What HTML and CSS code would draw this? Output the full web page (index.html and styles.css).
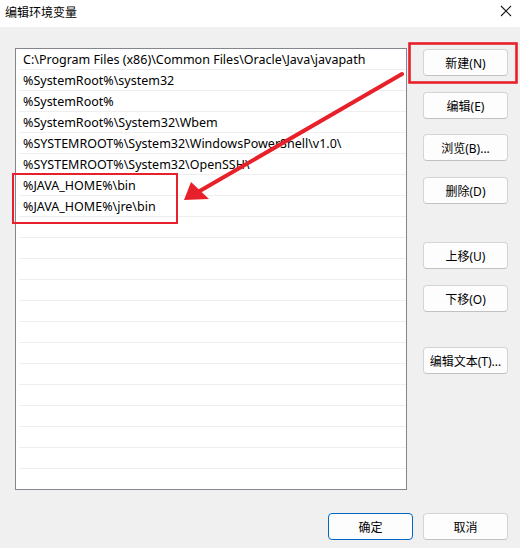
FILE: index.html
```html
<!DOCTYPE html>
<html lang="zh-CN">
<head>
<meta charset="utf-8">
<title>编辑环境变量</title>
<link rel="stylesheet" href="styles.css">
</head>
<body>
<div class="window">
  <div class="titlebar">
    <span class="title">编辑环境变量</span>
    <svg class="close" width="12" height="12" viewBox="0 0 12 12"><path d="M1 1L11 11M11 1L1 11" stroke="#1a1a1a" stroke-width="1.1" fill="none"/></svg>
  </div>
  <div class="content">
    <div class="main">
      <div class="list">
        <div class="row">C:\Program Files (x86)\Common Files\Oracle\Java\javapath</div>
        <div class="row">%SystemRoot%\system32</div>
        <div class="row">%SystemRoot%</div>
        <div class="row">%SystemRoot%\System32\Wbem</div>
        <div class="row">%SYSTEMROOT%\System32\WindowsPowerShell\v1.0\</div>
        <div class="row">%SYSTEMROOT%\System32\OpenSSH\</div>
        <div class="row">%JAVA_HOME%\bin</div>
        <div class="row">%JAVA_HOME%\jre\bin</div>
        <div class="row"></div><div class="row"></div><div class="row"></div><div class="row"></div>
        <div class="row"></div><div class="row"></div><div class="row"></div><div class="row"></div>
        <div class="row"></div><div class="row"></div><div class="row"></div><div class="row"></div>
        <div class="row last"></div>
      </div>
      <div class="side">
        <button class="btn first">新建(N)</button>
        <button class="btn">编辑(E)</button>
        <button class="btn">浏览(B)...</button>
        <button class="btn">删除(D)</button>
        <button class="btn group">上移(U)</button>
        <button class="btn">下移(O)</button>
        <button class="btn group2">编辑文本(T)...</button>
      </div>
    </div>
    <div class="footer">
      <button class="btn primary">确定</button>
      <button class="btn">取消</button>
    </div>
  </div>
  <svg class="annot" width="520" height="548" viewBox="0 0 520 548">
    <rect x="409.5" y="43.5" width="107" height="39" fill="none" stroke="#e8202a" stroke-width="2.6"/>
    <rect x="13" y="174" width="164" height="49" fill="none" stroke="#e8202a" stroke-width="2"/>
    <line x1="402" y1="74" x2="198" y2="192" stroke="#e8202a" stroke-width="4" stroke-linecap="round"/>
    <polygon points="184,200 191,182 209,199" fill="#e8202a"/>
  </svg>
</div>
</body>
</html>
```

FILE: styles.css
```css
html, body {
  margin: 0;
  padding: 0;
}
body {
  width: 520px;
  height: 548px;
  overflow: hidden;
  background: #f0f0f0;
  font-family: "Noto Sans", "Noto Sans CJK SC", sans-serif;
  font-size: 12px;
  color: #000;
}
.window {
  position: relative;
  width: 520px;
  height: 548px;
  display: flex;
  flex-direction: column;
}
.titlebar {
  height: 27px;
  background: #ffffff;
  display: flex;
  align-items: center;
  justify-content: space-between;
  padding: 0 8px 0 5px;
  box-sizing: border-box;
}
.title {
  font-family: "Noto Sans CJK SC", sans-serif;
  font-size: 12px;
  line-height: 14px;
  color: #000;
  margin-top: -3px;
}
.close {
  margin-top: -5px;
}
.content {
  padding: 21px 12px 0 15px;
  display: flex;
  flex-direction: column;
}
.main {
  display: flex;
  gap: 16px;
}
.list {
  width: 392px;
  height: 442px;
  box-sizing: border-box;
  border: 1px solid #85858d;
  background: #fff;
  overflow: hidden;
}
.row {
  height: 19px;
  padding-top: 1px;
  line-height: 20px;
  font-size: 12.5px;
  border-bottom: 1px solid #eeeeee;
  margin-left: 3px;
  padding-left: 4px;
  white-space: nowrap;
  color: #000;
}
.row.last {
  border-bottom: none;
}
.side {
  width: 85px;
  display: flex;
  flex-direction: column;
  gap: 15.5px;
}
.btn {
  width: 85px;
  height: 27px;
  box-sizing: border-box;
  background: #fdfdfd;
  border: 1px solid #d4d4d4;
  border-bottom-color: #c2c2c2;
  border-radius: 4px;
  font-family: "Noto Sans", "Noto Sans CJK SC", sans-serif;
  font-size: 12px;
  color: #000;
  padding: 1px 0 0 0;
  line-height: 25px;
}
.btn.first {
  margin-top: 1px;
}
.btn.group {
  margin-top: 23px;
}
.btn.group2 {
  margin-top: 20px;
}
.footer {
  margin-top: 23px;
  display: flex;
  justify-content: flex-end;
  gap: 10px;
}
.btn.primary {
  border: 1px solid #0067c0;
}
.annot {
  position: absolute;
  left: 0;
  top: 0;
  pointer-events: none;
}
```
